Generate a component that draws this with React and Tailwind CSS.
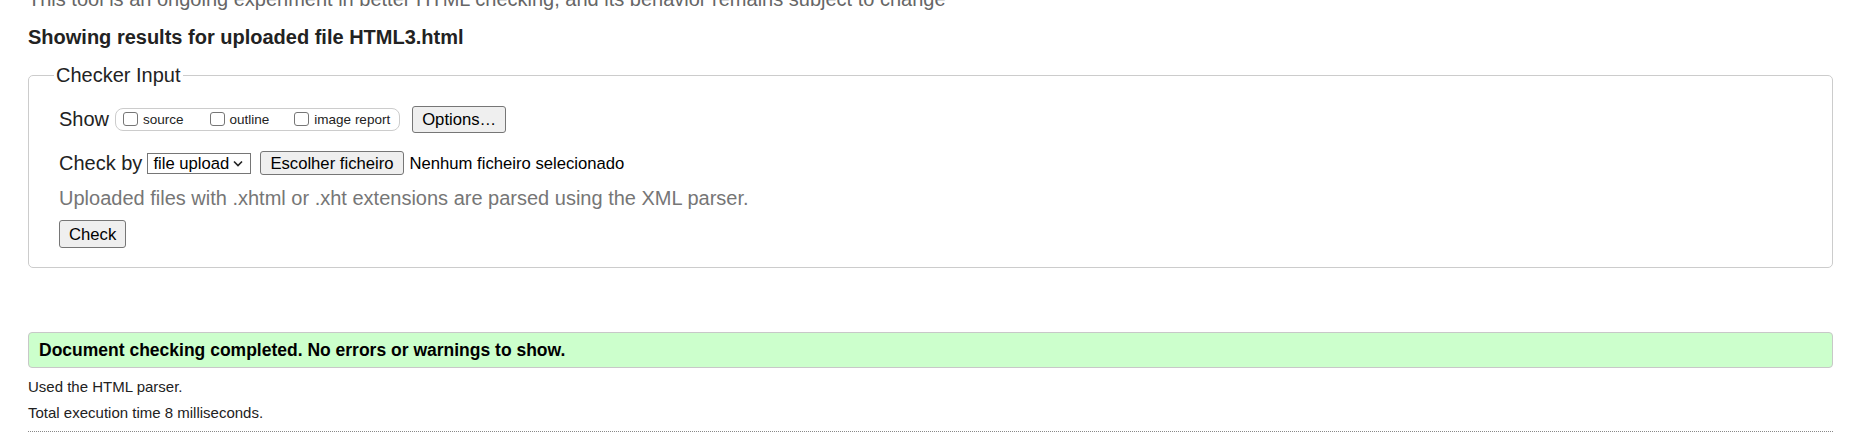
import React from 'react';

const Checkbox = ({ label, className = '' }) => (
  <label className={`flex items-center gap-[5px] ${className}`}>
    <input
      type="checkbox"
      className="appearance-none w-[15px] h-[14px] border border-[#767676] rounded-[3px] bg-white -mt-[2px]"
    />
    <span className="text-[13.5px] leading-[16px]">{label}</span>
  </label>
);

const NativeButton = ({ children, className = '' }) => (
  <button
    type="button"
    className={`bg-[#efefef] border border-[#767676] rounded-[3px] text-[16.67px] leading-[19px] text-black px-[9px] ${className}`}
  >
    {children}
  </button>
);

export default function App() {
  return (
    <div className="min-h-screen bg-white pl-[28px] pr-[24px] font-['Liberation_Sans',Arial,sans-serif] text-[20px] leading-[23px] text-[#222]">
      <p className="-mt-[12px] text-[#666] whitespace-nowrap">
        This tool is an ongoing experiment in better HTML checking, and its behavior remains subject to change
      </p>

      <h2 className="mt-[15px] font-bold">Showing results for uploaded file HTML3.html</h2>

      <fieldset className="mt-[15px] border border-[#ccc] rounded-[5px] pl-[30px] pr-[20px] pb-[19px]">
        <legend className="-ml-[5px] px-[2px]">Checker Input</legend>

        <div className="mt-[19px] flex items-center h-[27px]">
          <span>Show</span>
          <div className="ml-[6px] flex items-center h-[23px] border border-[#ccc] rounded-[8px] pl-[7px] pr-[9px]">
            <Checkbox label="source" />
            <Checkbox label="outline" className="ml-[26px]" />
            <Checkbox label="image report" className="ml-[25px]" />
          </div>
          <NativeButton className="ml-[12px] h-[27px]">Options…</NativeButton>
        </div>

        <div className="mt-[18px] flex items-center h-[24px]">
          <span>Check by</span>
          <div className="ml-[5px] flex items-center justify-between w-[104px] h-[21px] border border-[#767676] bg-white pl-[5px] pr-[7px] text-[16.67px] leading-[19px] text-black">
            <span>file upload</span>
            <svg width="10" height="7" viewBox="0 0 10 7" fill="none">
              <path d="M1 1.5 L5 5.5 L9 1.5" stroke="#222" strokeWidth="1.6" />
            </svg>
          </div>
          <NativeButton className="ml-[9px] h-[24px]">Escolher ficheiro</NativeButton>
          <span className="ml-[6px] text-[16.67px] text-black">Nenhum ficheiro selecionado</span>
        </div>

        <p className="mt-[12px] text-[#767676]">
          Uploaded files with .xhtml or .xht extensions are parsed using the XML parser.
        </p>

        <NativeButton className="mt-[10px] h-[28px]">Check</NativeButton>
      </fieldset>

      <div className="mt-[64px] h-[36px] flex items-center border border-[#c8c8c8] rounded-[4px] bg-[#ccffcc] pl-[10px]">
        <p className="font-bold text-[17.5px] text-black">
          Document checking completed. No errors or warnings to show.
        </p>
      </div>

      <p className="mt-[10px] text-[15px] leading-[17px]">Used the HTML parser.</p>
      <p className="mt-[9px] text-[15px] leading-[17px]">Total execution time 8 milliseconds.</p>

      <div className="mt-[10px] border-t border-dotted border-[#888]" />
    </div>
  );
}
